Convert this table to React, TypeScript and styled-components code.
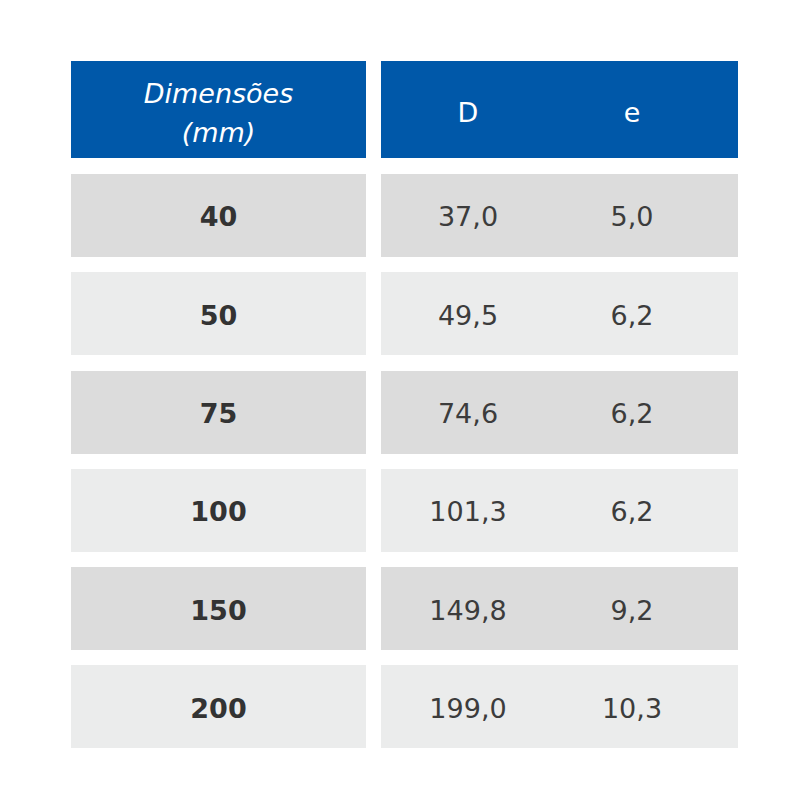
import React from "react";
import styled, { createGlobalStyle } from "styled-components";

const Global = createGlobalStyle`
  html, body { margin: 0; padding: 0; background: #ffffff; }
  body { font-family: "DejaVu Sans", "Open Sans", sans-serif; }
`;

const Page = styled.div`
  width: 800px;
  height: 800px;
  box-sizing: border-box;
  padding: 61px 62px 0 71px;
`;

const Table = styled.div`
  display: grid;
  grid-template-columns: 295px 357px;
  column-gap: 15px;
  row-gap: 15.3px;
`;

const HeadCell = styled.div<{ $split?: boolean }>`
  background: #0058a9;
  color: #ffffff;
  height: 97px;
  box-sizing: border-box;
  padding-top: 6px;
  display: ${(p) => (p.$split ? "grid" : "flex")};
  grid-template-columns: 174px 154px;
  align-items: center;
  justify-content: ${(p) => (p.$split ? "start" : "center")};
  font-size: 27px;
  margin-bottom: 0.7px;
`;

const HeadTitle = styled.div`
  font-style: italic;
  text-align: center;
  line-height: 39px;
  font-size: 27px;
`;

const HeadLabel = styled.div`
  text-align: center;
`;

const Cell = styled.div<{ $dark: boolean; $split?: boolean }>`
  background: ${(p) => (p.$dark ? "#dcdcdc" : "#ebecec")};
  color: #3c3c3c;
  height: 83px;
  box-sizing: border-box;
  padding-top: 3px;
  font-size: 27px;
  display: ${(p) => (p.$split ? "grid" : "flex")};
  grid-template-columns: 174px 154px;
  align-items: center;
  justify-content: ${(p) => (p.$split ? "start" : "center")};
`;

const SizeText = styled.span`
  font-weight: 700;
  color: #333333;
`;

const Value = styled.div`
  text-align: center;
`;

const rows = [
  ["40", "37,0", "5,0"],
  ["50", "49,5", "6,2"],
  ["75", "74,6", "6,2"],
  ["100", "101,3", "6,2"],
  ["150", "149,8", "9,2"],
  ["200", "199,0", "10,3"],
];

export default function App() {
  return (
    <>
      <Global />
      <Page>
        <Table>
          <HeadCell>
            <HeadTitle>
              Dimensões
              <br />
              (mm)
            </HeadTitle>
          </HeadCell>
          <HeadCell $split>
            <HeadLabel>D</HeadLabel>
            <HeadLabel>e</HeadLabel>
          </HeadCell>
          {rows.map((r, i) => (
            <React.Fragment key={r[0]}>
              <Cell $dark={i % 2 === 0}>
                <SizeText>{r[0]}</SizeText>
              </Cell>
              <Cell $dark={i % 2 === 0} $split>
                <Value>{r[1]}</Value>
                <Value>{r[2]}</Value>
              </Cell>
            </React.Fragment>
          ))}
        </Table>
      </Page>
    </>
  );
}
